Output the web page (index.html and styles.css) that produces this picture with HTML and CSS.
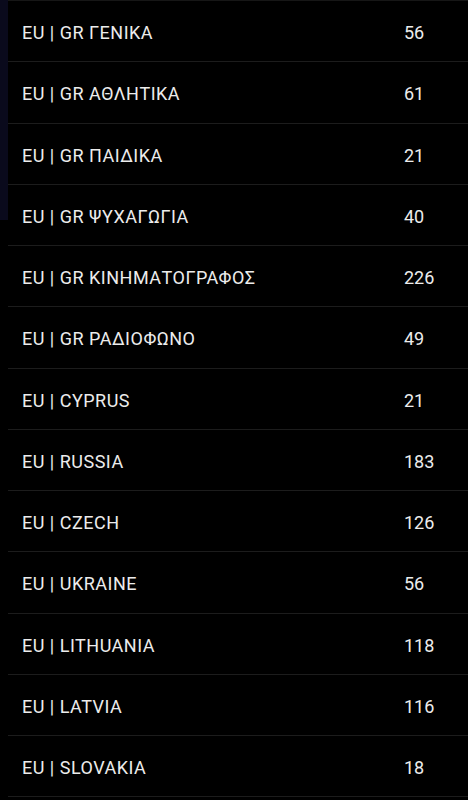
FILE: index.html
```html
<!DOCTYPE html>
<html>
<head>
<meta charset="utf-8">
<link rel="stylesheet" href="styles.css">
</head>
<body>
<div class="list">
  <div class="row"><span class="name">EU | GR ΓΕΝΙΚΑ</span><span class="count">56</span></div>
  <div class="row"><span class="name">EU | GR ΑΘΛΗΤΙΚΑ</span><span class="count">61</span></div>
  <div class="row"><span class="name">EU | GR ΠΑΙΔΙΚΑ</span><span class="count">21</span></div>
  <div class="row"><span class="name">EU | GR ΨΥΧΑΓΩΓΙΑ</span><span class="count">40</span></div>
  <div class="row"><span class="name">EU | GR ΚΙΝΗΜΑΤΟΓΡΑΦΟΣ</span><span class="count">226</span></div>
  <div class="row"><span class="name">EU | GR ΡΑΔΙΟΦΩΝΟ</span><span class="count">49</span></div>
  <div class="row"><span class="name">EU | CYPRUS</span><span class="count">21</span></div>
  <div class="row"><span class="name">EU | RUSSIA</span><span class="count">183</span></div>
  <div class="row"><span class="name">EU | CZECH</span><span class="count">126</span></div>
  <div class="row"><span class="name">EU | UKRAINE</span><span class="count">56</span></div>
  <div class="row"><span class="name">EU | LITHUANIA</span><span class="count">118</span></div>
  <div class="row"><span class="name">EU | LATVIA</span><span class="count">116</span></div>
  <div class="row"><span class="name">EU | SLOVAKIA</span><span class="count">18</span></div>
</div>
</body>
</html>
```
FILE: styles.css
```css
html, body {
  margin: 0;
  padding: 0;
  height: 100%;
  overflow: hidden;
}
body {
  background-color: #000;
  background-image: linear-gradient(to bottom, #0a0a1c 0, #0a0a1c 220px, #000 220px);
  background-size: 8px 100%;
  background-repeat: no-repeat;
  font-family: Roboto, "Noto Sans", sans-serif;
  color: #ececec;
}
.list {
  margin-left: 8px;
  border-top: 1px solid #161616;
  background: #000;
}
.row {
  display: grid;
  grid-template-columns: 1fr 64px;
  align-items: center;
  height: 57.25px;
  padding-top: 3px;
  border-bottom: 1px solid #1c1c1c;
  font-size: 18px;
}
.name {
  padding-left: 14px;
  white-space: nowrap;
  letter-spacing: 0.5px;
}
.count {
  white-space: nowrap;
}
```
